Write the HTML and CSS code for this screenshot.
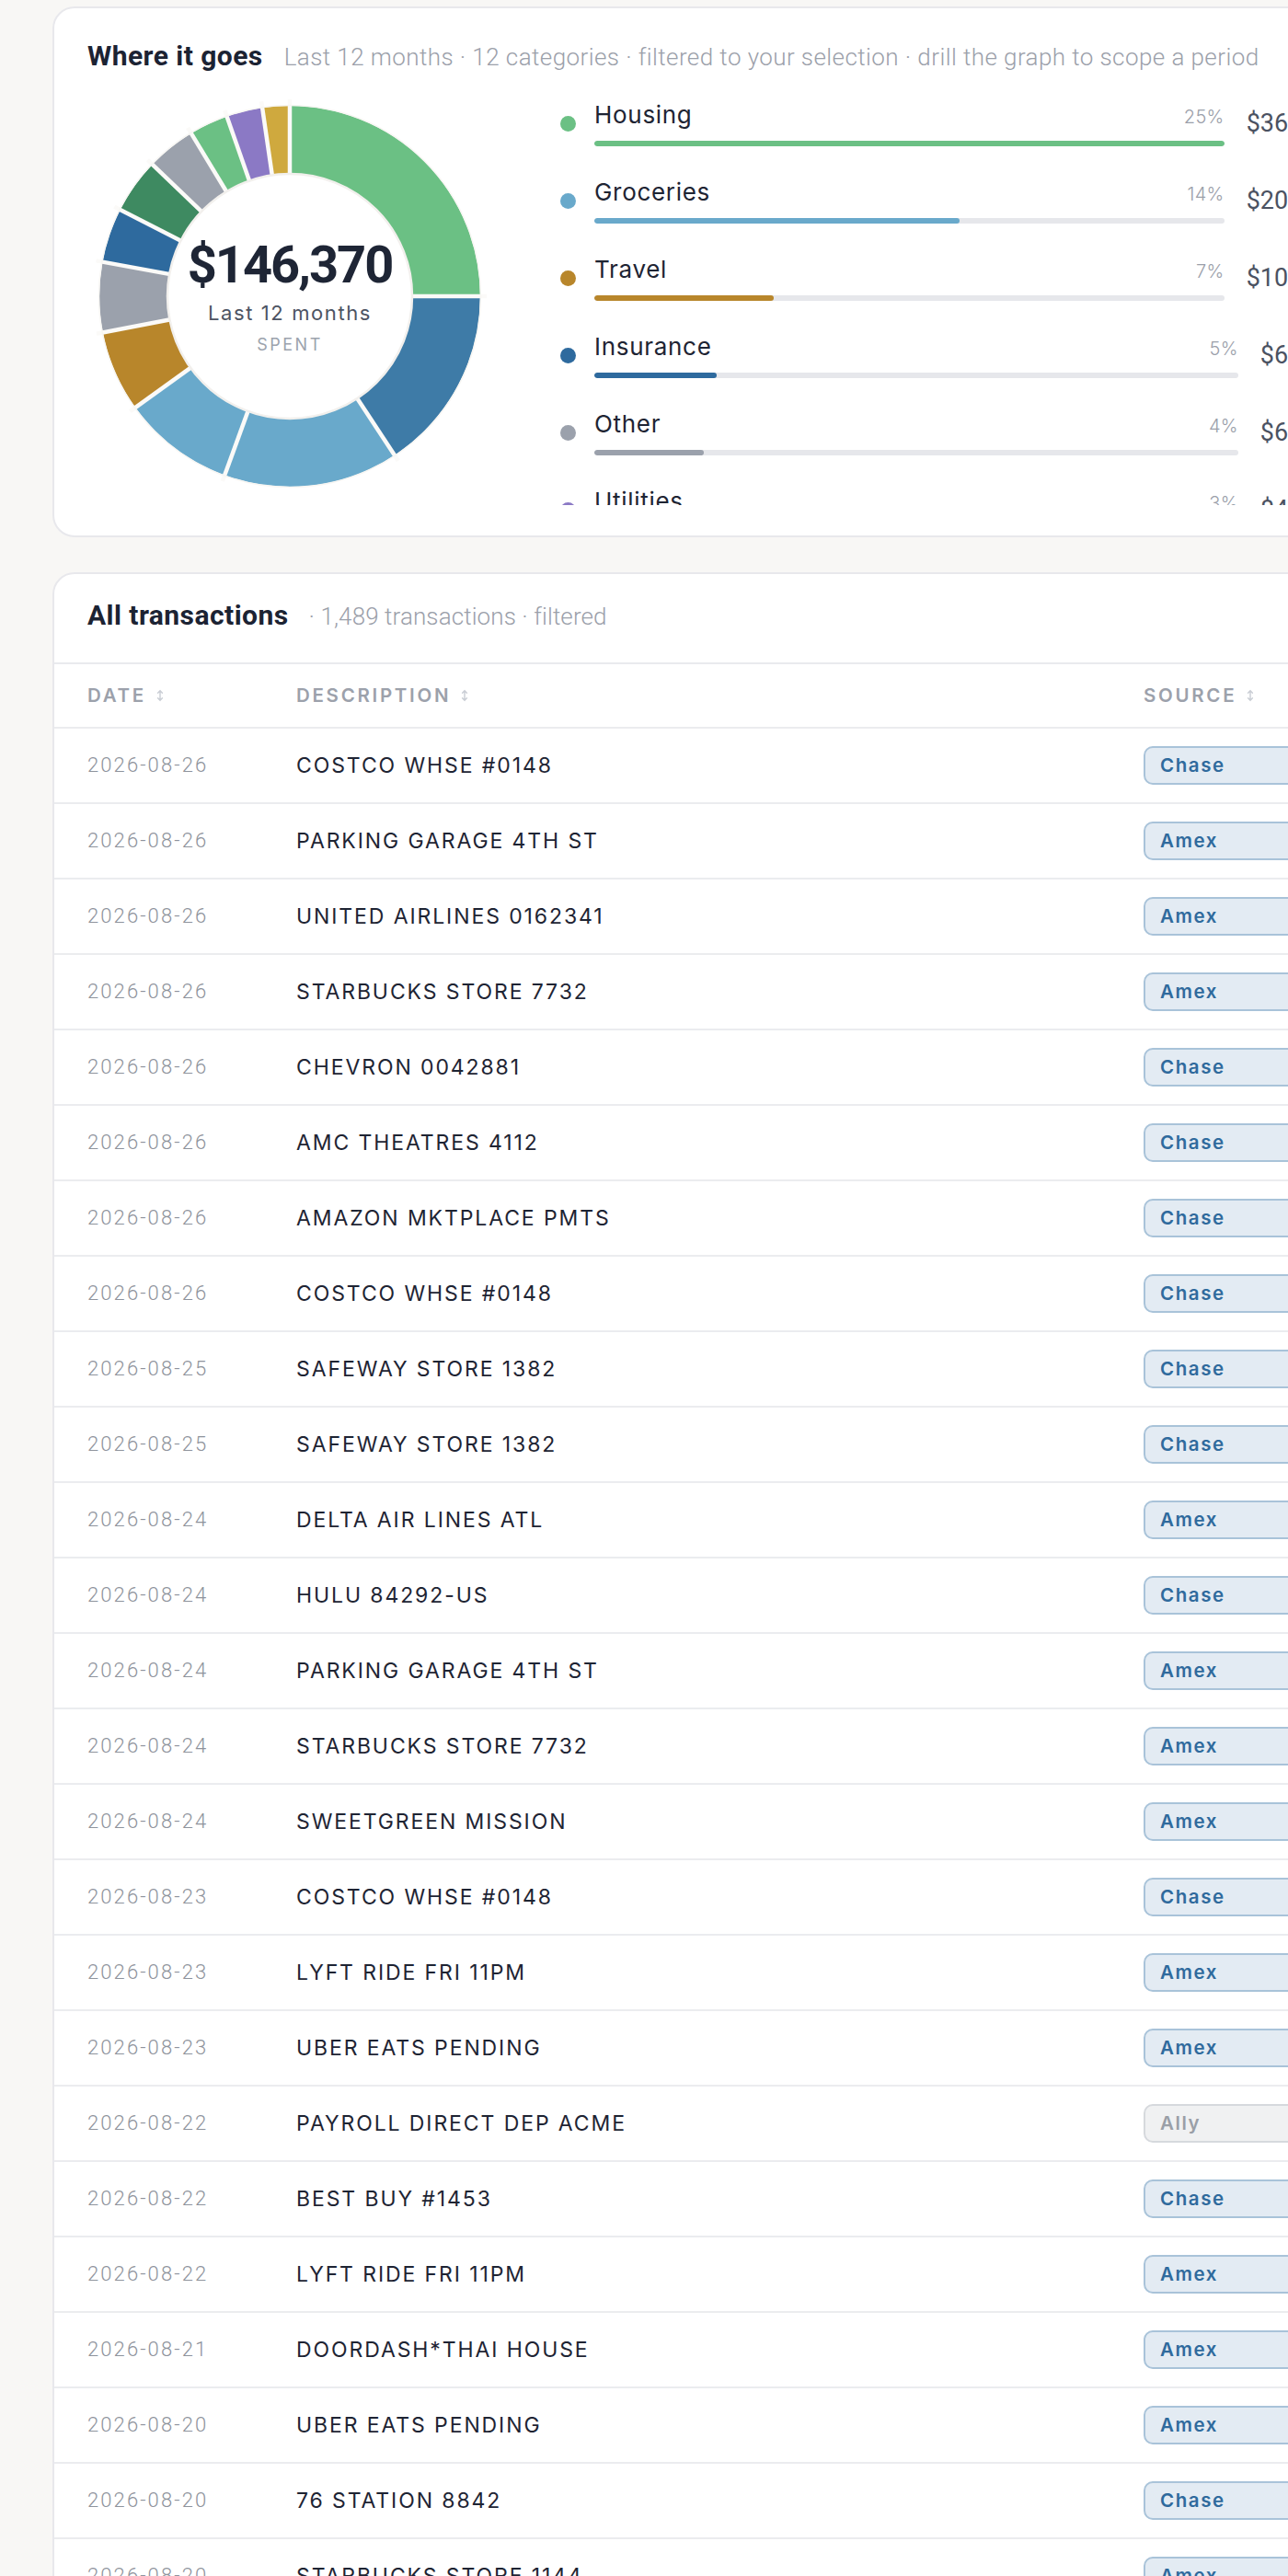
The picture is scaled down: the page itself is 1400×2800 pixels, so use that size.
FILE: index.html
```html
<!DOCTYPE html>
<html lang="en">
<head>
<meta charset="utf-8">
<title>Spending overview</title>
<link rel="stylesheet" href="styles.css">
</head>
<body>
<main class="page">
  <section class="card breakdown">
    <header class="card-head">
      <h2 class="card-title">Where it goes</h2>
      <span class="card-sub">Last 12 months · 12 categories · filtered to your selection · drill the graph to scope a period</span>
    </header>
    <div class="breakdown-body">
      <div class="donut">
        <svg class="donut-svg" viewBox="0 0 440 440" width="440" height="440">
          <g transform="rotate(-90 220 220)" fill="none" stroke-width="74">
            <circle cx="220" cy="220" r="170" stroke="#6bc084" stroke-dasharray="267.04 1068.14" stroke-dashoffset="0"/>
            <circle cx="220" cy="220" r="170" stroke="#3e7ba7" stroke-dasharray="167.94 1068.14" stroke-dashoffset="-267.04"/>
            <circle cx="220" cy="220" r="170" stroke="#69a9cb" stroke-dasharray="158.44 1068.14" stroke-dashoffset="-434.98"/>
            <circle cx="220" cy="220" r="170" stroke="#69a9cb" stroke-dasharray="101.47 1068.14" stroke-dashoffset="-593.42"/>
            <circle cx="220" cy="220" r="170" stroke="#b8862b" stroke-dasharray="73.58 1068.14" stroke-dashoffset="-694.89"/>
            <circle cx="220" cy="220" r="170" stroke="#9ba1ac" stroke-dasharray="63.50 1068.14" stroke-dashoffset="-768.48"/>
            <circle cx="220" cy="220" r="170" stroke="#2e6a9e" stroke-dasharray="49.25 1068.14" stroke-dashoffset="-831.98"/>
            <circle cx="220" cy="220" r="170" stroke="#3e8a61" stroke-dasharray="49.85 1068.14" stroke-dashoffset="-881.23"/>
            <circle cx="220" cy="220" r="170" stroke="#9ba1ac" stroke-dasharray="44.51 1068.14" stroke-dashoffset="-931.08"/>
            <circle cx="220" cy="220" r="170" stroke="#6bc084" stroke-dasharray="35.31 1068.14" stroke-dashoffset="-975.59"/>
            <circle cx="220" cy="220" r="170" stroke="#8b79c5" stroke-dasharray="32.64 1068.14" stroke-dashoffset="-1010.90"/>
            <circle cx="220" cy="220" r="170" stroke="#cfa93e" stroke-dasharray="24.63 1068.14" stroke-dashoffset="-1043.54"/>
          </g>
          <g stroke="#fbfaf8" stroke-width="4.5">
            <line x1="220" y1="92" x2="220" y2="6" transform="rotate(0 220 220)"/>
            <line x1="220" y1="92" x2="220" y2="6" transform="rotate(90 220 220)"/>
            <line x1="220" y1="92" x2="220" y2="6" transform="rotate(146.6 220 220)"/>
            <line x1="220" y1="92" x2="220" y2="6" transform="rotate(200 220 220)"/>
            <line x1="220" y1="92" x2="220" y2="6" transform="rotate(234.2 220 220)"/>
            <line x1="220" y1="92" x2="220" y2="6" transform="rotate(259 220 220)"/>
            <line x1="220" y1="92" x2="220" y2="6" transform="rotate(280.4 220 220)"/>
            <line x1="220" y1="92" x2="220" y2="6" transform="rotate(297 220 220)"/>
            <line x1="220" y1="92" x2="220" y2="6" transform="rotate(313.8 220 220)"/>
            <line x1="220" y1="92" x2="220" y2="6" transform="rotate(328.8 220 220)"/>
            <line x1="220" y1="92" x2="220" y2="6" transform="rotate(340.7 220 220)"/>
            <line x1="220" y1="92" x2="220" y2="6" transform="rotate(351.7 220 220)"/>
          </g>
          <circle cx="220" cy="220" r="133" fill="#fff" stroke="#f2f0ed" stroke-width="2.5"/>
          <circle cx="220" cy="220" r="207.5" fill="none" stroke="#f7f6f3" stroke-width="1.5"/>
        </svg>
        <div class="donut-center">
          <div class="donut-total">$146,370</div>
          <div class="donut-label">Last 12 months</div>
          <div class="donut-kicker">SPENT</div>
        </div>
      </div>
      <ul class="legend">
        <li class="legend-row">
          <span class="legend-dot c-housing"></span>
          <div class="legend-main">
            <div class="legend-line"><span class="legend-name">Housing</span><span class="legend-pct">25%</span></div>
            <div class="legend-track"><div class="legend-fill c-housing" style="width:100%"></div></div>
          </div>
          <span class="legend-amt">$36,592</span>
        </li>
        <li class="legend-row">
          <span class="legend-dot c-groceries"></span>
          <div class="legend-main">
            <div class="legend-line"><span class="legend-name">Groceries</span><span class="legend-pct">14%</span></div>
            <div class="legend-track"><div class="legend-fill c-groceries" style="width:58%"></div></div>
          </div>
          <span class="legend-amt">$20,492</span>
        </li>
        <li class="legend-row">
          <span class="legend-dot c-travel"></span>
          <div class="legend-main">
            <div class="legend-line"><span class="legend-name">Travel</span><span class="legend-pct">7%</span></div>
            <div class="legend-track"><div class="legend-fill c-travel" style="width:28.5%"></div></div>
          </div>
          <span class="legend-amt">$10,246</span>
        </li>
        <li class="legend-row">
          <span class="legend-dot c-insurance"></span>
          <div class="legend-main">
            <div class="legend-line"><span class="legend-name">Insurance</span><span class="legend-pct">5%</span></div>
            <div class="legend-track"><div class="legend-fill c-insurance" style="width:19%"></div></div>
          </div>
          <span class="legend-amt">$6,839</span>
        </li>
        <li class="legend-row">
          <span class="legend-dot c-other"></span>
          <div class="legend-main">
            <div class="legend-line"><span class="legend-name">Other</span><span class="legend-pct">4%</span></div>
            <div class="legend-track"><div class="legend-fill c-other" style="width:17%"></div></div>
          </div>
          <span class="legend-amt">$6,221</span>
        </li>
        <li class="legend-row">
          <span class="legend-dot c-utilities"></span>
          <div class="legend-main">
            <div class="legend-line"><span class="legend-name">Utilities</span><span class="legend-pct">3%</span></div>
            <div class="legend-track"><div class="legend-fill c-utilities" style="width:12.5%"></div></div>
          </div>
          <span class="legend-amt">$4,584</span>
        </li>
        <li class="legend-row">
          <span class="legend-dot c-dining"></span>
          <div class="legend-main">
            <div class="legend-line"><span class="legend-name">Dining</span><span class="legend-pct">3%</span></div>
            <div class="legend-track"><div class="legend-fill c-dining" style="width:12%"></div></div>
          </div>
          <span class="legend-amt">$4,390</span>
        </li>
      </ul>
    </div>
  </section>

  <section class="card txn-card">
    <header class="txn-head">
      <h2 class="card-title">All transactions</h2>
      <span class="card-sub txn-sub">· 1,489 transactions · filtered</span>
    </header>
    <div class="txn-table">
      <div class="txn-row txn-cols">
        <span class="col-h">DATE <svg class="sort" viewBox="0 0 8 14" width="8" height="14"><path d="M4 2v10M1.6 4.2L4 1.6l2.4 2.6M1.6 9.8L4 12.4l2.4-2.6" fill="none" stroke="currentColor" stroke-width="1.4" stroke-linecap="round" stroke-linejoin="round"/></svg></span>
        <span class="col-h">DESCRIPTION <svg class="sort" viewBox="0 0 8 14" width="8" height="14"><path d="M4 2v10M1.6 4.2L4 1.6l2.4 2.6M1.6 9.8L4 12.4l2.4-2.6" fill="none" stroke="currentColor" stroke-width="1.4" stroke-linecap="round" stroke-linejoin="round"/></svg></span>
        <span class="col-h">SOURCE <svg class="sort" viewBox="0 0 8 14" width="8" height="14"><path d="M4 2v10M1.6 4.2L4 1.6l2.4 2.6M1.6 9.8L4 12.4l2.4-2.6" fill="none" stroke="currentColor" stroke-width="1.4" stroke-linecap="round" stroke-linejoin="round"/></svg></span>
      </div>
      <div class="txn-row"><span class="date">2026-08-26</span><span class="desc">COSTCO WHSE #0148</span><span class="src">Chase</span></div>
      <div class="txn-row"><span class="date">2026-08-26</span><span class="desc">PARKING GARAGE 4TH ST</span><span class="src">Amex</span></div>
      <div class="txn-row"><span class="date">2026-08-26</span><span class="desc">UNITED AIRLINES 0162341</span><span class="src">Amex</span></div>
      <div class="txn-row"><span class="date">2026-08-26</span><span class="desc">STARBUCKS STORE 7732</span><span class="src">Amex</span></div>
      <div class="txn-row"><span class="date">2026-08-26</span><span class="desc">CHEVRON 0042881</span><span class="src">Chase</span></div>
      <div class="txn-row"><span class="date">2026-08-26</span><span class="desc">AMC THEATRES 4112</span><span class="src">Chase</span></div>
      <div class="txn-row"><span class="date">2026-08-26</span><span class="desc">AMAZON MKTPLACE PMTS</span><span class="src">Chase</span></div>
      <div class="txn-row"><span class="date">2026-08-26</span><span class="desc">COSTCO WHSE #0148</span><span class="src">Chase</span></div>
      <div class="txn-row"><span class="date">2026-08-25</span><span class="desc">SAFEWAY STORE 1382</span><span class="src">Chase</span></div>
      <div class="txn-row"><span class="date">2026-08-25</span><span class="desc">SAFEWAY STORE 1382</span><span class="src">Chase</span></div>
      <div class="txn-row"><span class="date">2026-08-24</span><span class="desc">DELTA AIR LINES ATL</span><span class="src">Amex</span></div>
      <div class="txn-row"><span class="date">2026-08-24</span><span class="desc">HULU 84292-US</span><span class="src">Chase</span></div>
      <div class="txn-row"><span class="date">2026-08-24</span><span class="desc">PARKING GARAGE 4TH ST</span><span class="src">Amex</span></div>
      <div class="txn-row"><span class="date">2026-08-24</span><span class="desc">STARBUCKS STORE 7732</span><span class="src">Amex</span></div>
      <div class="txn-row"><span class="date">2026-08-24</span><span class="desc">SWEETGREEN MISSION</span><span class="src">Amex</span></div>
      <div class="txn-row"><span class="date">2026-08-23</span><span class="desc">COSTCO WHSE #0148</span><span class="src">Chase</span></div>
      <div class="txn-row"><span class="date">2026-08-23</span><span class="desc">LYFT RIDE FRI 11PM</span><span class="src">Amex</span></div>
      <div class="txn-row"><span class="date">2026-08-23</span><span class="desc">UBER EATS PENDING</span><span class="src">Amex</span></div>
      <div class="txn-row"><span class="date">2026-08-22</span><span class="desc">PAYROLL DIRECT DEP ACME</span><span class="src src-ally">Ally</span></div>
      <div class="txn-row"><span class="date">2026-08-22</span><span class="desc">BEST BUY #1453</span><span class="src">Chase</span></div>
      <div class="txn-row"><span class="date">2026-08-22</span><span class="desc">LYFT RIDE FRI 11PM</span><span class="src">Amex</span></div>
      <div class="txn-row"><span class="date">2026-08-21</span><span class="desc">DOORDASH*THAI HOUSE</span><span class="src">Amex</span></div>
      <div class="txn-row"><span class="date">2026-08-20</span><span class="desc">UBER EATS PENDING</span><span class="src">Amex</span></div>
      <div class="txn-row"><span class="date">2026-08-20</span><span class="desc">76 STATION 8842</span><span class="src">Chase</span></div>
      <div class="txn-row"><span class="date">2026-08-20</span><span class="desc">STARBUCKS STORE 1144</span><span class="src">Amex</span></div>
      <div class="txn-row"><span class="date">2026-08-19</span><span class="desc">TRADER JOE'S #552</span><span class="src">Chase</span></div>
    </div>
  </section>
</main>
</body>
</html>
```

FILE: styles.css
```css
* { box-sizing: border-box; }

html {
  overflow-x: hidden;
  scrollbar-width: none;
}
html::-webkit-scrollbar { display: none; }

body {
  margin: 0;
  background: #f8f7f5;
  font-family: "Inter", "Noto Sans", sans-serif;
  color: #1e2433;
}

.page {
  width: 1546px;
  padding: 7px 0 0 57px;
  display: flex;
  flex-direction: column;
  gap: 38px;
}

.card {
  width: 1432px;
  background: #fff;
  border: 2px solid #e8e8ec;
  border-radius: 24px;
}

/* ---------- breakdown card ---------- */
.breakdown {
  padding: 34px 36px 33px;
}

.card-head {
  display: flex;
  align-items: baseline;
  gap: 23px;
  height: 36px;
}

.card-title {
  margin: 0;
  font: 700 30px/36px "Roboto", sans-serif;
  letter-spacing: 0.45px;
  color: #1c2333;
  white-space: nowrap;
}

.card-sub {
  font: 300 26px/30px "Roboto", sans-serif;
  letter-spacing: 0.42px;
  color: #9ba0aa;
  white-space: nowrap;
}

.txn-sub {
  letter-spacing: 0.1px;
}

.breakdown-body {
  display: flex;
  margin-top: 23px;
  height: 447px;
}

.donut {
  position: relative;
  flex: none;
  width: 440px;
  height: 440px;
}

.donut-svg { display: block; }

.donut-center {
  position: absolute;
  inset: 0;
  display: flex;
  flex-direction: column;
  align-items: center;
  justify-content: center;
}

.donut-total {
  font: 700 56px/60px "Roboto", sans-serif;
  letter-spacing: -2px;
  color: #1e2535;
}

.donut-label {
  margin-top: 8px;
  font: 400 22px/28px "Inter", sans-serif;
  letter-spacing: 1.6px;
  color: #4d5463;
}

.donut-kicker {
  margin-top: 10px;
  font: 400 18px/22px "Inter", sans-serif;
  letter-spacing: 2.5px;
  color: #9ca3ad;
}

.legend {
  flex: 1;
  min-width: 0;
  margin: 0 0 0 74px;
  padding: 7px 0 0;
  list-style: none;
  height: 447px;
  overflow: hidden;
  display: flex;
  flex-direction: column;
  gap: 34px;
}

.legend-row {
  flex: none;
  display: flex;
  align-items: center;
}

.legend-dot {
  flex: none;
  width: 17px;
  height: 17px;
  border-radius: 50%;
  margin-right: 20px;
}

.legend-main {
  flex: 1;
  min-width: 0;
}

.legend-line {
  display: flex;
  justify-content: space-between;
  align-items: baseline;
  height: 32px;
}

.legend-name {
  font: 400 26px/32px "Inter", sans-serif;
  letter-spacing: 0.7px;
  color: #1e2433;
}

.legend-pct {
  font: 300 20px/32px "Inter", sans-serif;
  letter-spacing: 0.3px;
  color: #9ba0aa;
}

.legend-track {
  margin-top: 12px;
  height: 6px;
  border-radius: 3px;
  background: #e6e7eb;
  overflow: hidden;
}

.legend-fill {
  height: 100%;
  border-radius: 3px;
}

.legend-amt {
  flex: none;
  margin-left: 24px;
  font: 400 27px/32px "Roboto", sans-serif;
  color: #4b5262;
}

.c-housing { background: #6bc084; }
.c-groceries { background: #69a9cb; }
.c-travel { background: #b8862b; }
.c-insurance { background: #2e6a9e; }
.c-other { background: #9ba1ac; }
.c-utilities { background: #8b79c5; }
.c-dining { background: #3e8a61; }

/* ---------- transactions card ---------- */
.txn-head {
  display: flex;
  align-items: baseline;
  gap: 22px;
  height: 98px;
  padding: 27px 36px 0;
  border-bottom: 2px solid #e9eaee;
}

.txn-row {
  display: grid;
  grid-template-columns: 227px 921px 1fr;
  align-items: center;
  height: 82px;
  padding: 0 36px;
  border-bottom: 2px solid #ebecef;
}

.txn-row.txn-cols {
  height: 70px;
}

.col-h {
  display: inline-flex;
  align-items: center;
  gap: 11px;
  font: 600 20.5px/24px "Inter", sans-serif;
  letter-spacing: 2.7px;
  color: #9ca1ab;
}

.sort {
  color: #c9cdd4;
  flex: none;
}

.date {
  font: 300 22px/28px "Roboto", sans-serif;
  letter-spacing: 2.1px;
  color: #8e939c;
}

.desc {
  font: 400 23px/28px "Inter", sans-serif;
  letter-spacing: 1.9px;
  color: #1e2433;
  white-space: nowrap;
}

.src {
  display: inline-flex;
  align-items: center;
  width: 180px;
  height: 42px;
  padding-left: 16px;
  border: 2px solid #a9c3d9;
  border-radius: 10px;
  background: #e3ebf3;
  color: #2f6a9d;
  font: 600 20.5px/24px "Inter", sans-serif;
  letter-spacing: 1.6px;
}

.src-ally {
  border-color: #d6d9dd;
  background: #f0f1f2;
  color: #9a9fa7;
}
```
